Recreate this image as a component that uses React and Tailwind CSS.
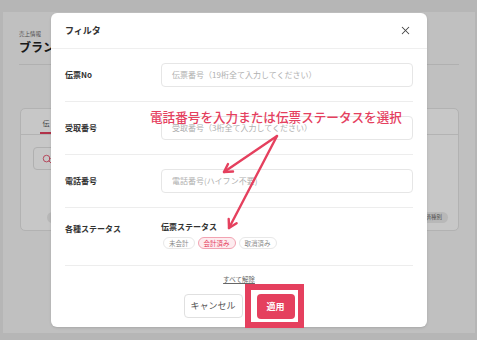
import React from "react";
import { X, Search } from "lucide-react";

const RED = "#e5405e";

function FieldRow({ label, placeholder }) {
  return (
    <div className="flex items-center h-[53px] border-b border-[#ededed]">
      <div className="w-[96px] text-[8px] font-bold text-[#333] leading-[10px]">{label}</div>
      <div className="flex-1 h-[24px] border border-[#e6e6e6] rounded-[4px] flex items-center pl-[10px] text-[8px] text-[#b0b0b0]">
        {placeholder}
      </div>
    </div>
  );
}

function Chip({ children, active }) {
  return (
    <span
      className={
        active
          ? "h-[12px] px-[5px] rounded-full border border-[#f2a3b2] bg-[#fdecef] text-[6.5px] leading-[10px] text-[#e5405e] flex items-center"
          : "h-[12px] px-[5px] rounded-full border border-[#e8e8e8] bg-white text-[6.5px] leading-[10px] text-[#8a8a8a] flex items-center"
      }
    >
      {children}
    </span>
  );
}

function BackgroundPage() {
  return (
    <div className="h-full bg-[#f6f6f6] pt-[18px] px-[16px] relative">
      <div className="text-[5.5px] text-[#666] leading-[8px]">売上情報</div>
      <div className="text-[12px] font-bold text-[#222] leading-[16px] mt-[1px]">ブランド売上</div>
      <div className="border-b border-[#e2e2e2] mt-[9px]" />
      <div className="mt-[43px] ml-[1px] h-[123px] bg-white rounded-[5px] border border-[#e4e4e4] flex flex-col">
        <div className="h-[26px] flex border-b border-[#e6e6e6]">
          <div className="ml-[19px] w-[12px] flex flex-col items-center justify-end">
            <span className="text-[7px] text-[#555] mb-[4px]">伝</span>
            <div className="h-[2px] w-[12px] bg-[#e5405e]" />
          </div>
        </div>
        <div className="ml-[12px] mt-[12px] w-[300px] h-[23px] border border-[#e2e2e2] rounded-[4px] flex items-center pl-[8px]">
          <Search size={10} color={RED} strokeWidth={2} />
        </div>
        <div className="flex-1 flex items-end justify-between pr-[10px] pb-[7px]">
          <span className="ml-[26px] h-[11px] w-[20px] rounded-full bg-[#ececec]" />
          <span className="h-[11px] px-[6px] rounded-full bg-[#ececec] text-[5.5px] leading-[11px] text-[#666]">決済種別</span>
        </div>
      </div>
    </div>
  );
}

export default function App() {
  return (
    <div
      className="w-[477px] h-[340px] relative overflow-hidden bg-[#e9e9e9]"
      style={{ fontFamily: '"Noto Sans CJK JP", "Noto Sans", sans-serif' }}
    >
      <div className="h-full pt-[12px] pl-[3px] pr-[2px] pb-[7px]">
        <BackgroundPage />
      </div>
      <div className="absolute inset-0 bg-black/[0.22]" />

      <div className="absolute left-[51px] top-[13px] w-[376px] h-[314px] bg-white rounded-[6px] shadow-sm flex flex-col">
        <div className="h-[36px] flex items-center justify-between pl-[14px] pr-[15px] border-b border-[#efefef]">
          <span className="text-[9px] font-bold text-[#333]">フィルタ</span>
          <X size={13} color="#444" strokeWidth={1.9} />
        </div>
        <div className="px-[14px]">
          <FieldRow label="伝票No" placeholder="伝票番号（19桁全て入力してください）" />
          <FieldRow label="受取番号" placeholder="受取番号（3桁全て入力してください）" />
          <FieldRow label="電話番号" placeholder="電話番号(ハイフン不要)" />
          <div className="flex items-start pt-[14px] h-[58px] border-b border-[#ededed]">
            <div className="w-[96px] mt-[2px] text-[8px] font-bold text-[#333] leading-[10px]">各種ステータス</div>
            <div className="flex flex-col">
              <span className="text-[8px] font-bold text-[#333] leading-[10px]">伝票ステータス</span>
              <div className="flex gap-[3px] mt-[5px] ml-[2px]">
                <Chip>未会計</Chip>
                <Chip active>会計済み</Chip>
                <Chip>取消済み</Chip>
              </div>
            </div>
          </div>
          <div className="flex justify-center pt-[9px]">
            <span className="text-[6.5px] leading-[9px] text-[#666] underline">すべて解除</span>
          </div>
          <div className="flex justify-center gap-[14px] mt-[10px]">
            <button className="w-[59px] h-[24px] border border-[#e0e0e0] rounded-[4px] bg-white text-[9px] text-[#555]">
              キャンセル
            </button>
            <button className="w-[38px] h-[25px] rounded-[4px] bg-[#e5405e] text-[9px] font-bold text-white">
              適用
            </button>
          </div>
        </div>
      </div>

      <div className="absolute left-[150px] top-[109px] text-[12.6px] leading-[16px] font-medium text-[#e5405e] whitespace-nowrap">
        電話番号を入力または伝票ステータスを選択
      </div>
      <div className="absolute left-[245px] top-[284px] w-[59px] h-[44px] border-[6px] border-[#e5405e]" />
      <svg className="absolute inset-0" width="477" height="340" viewBox="0 0 477 340">
        <g stroke={RED} strokeWidth="2.4" fill="none" strokeLinecap="round" strokeLinejoin="round">
          <path d="M277 136 L224 172" />
          <path d="M233 171.5 L224 172 L228 164" />
          <path d="M277 136 L229 228" />
          <path d="M236.6 223.2 L229 228 L228.7 219" />
        </g>
      </svg>
    </div>
  );
}
